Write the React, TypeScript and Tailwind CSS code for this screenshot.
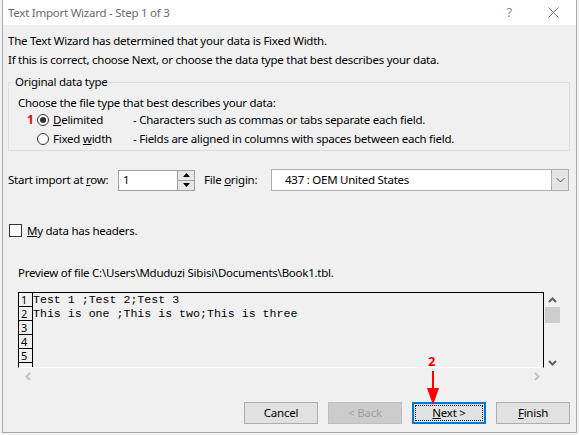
import React from 'react';

function Radio({ checked }: { checked?: boolean }) {
  return (
    <span className="flex h-[12px] w-[12px] shrink-0 items-center justify-center rounded-full border border-[#333333] bg-white">
      {checked && <span className="h-[6px] w-[6px] rounded-full bg-[#333333]" />}
    </span>
  );
}

function Chevron({ dir, color }: { dir: 'up' | 'down' | 'left' | 'right'; color: string }) {
  const d = {
    up: 'M1 6 L4.5 2.5 L8 6',
    down: 'M1 3 L4.5 6.5 L8 3',
    left: 'M6 1 L2.5 4.5 L6 8',
    right: 'M3 1 L6.5 4.5 L3 8',
  }[dir];
  return (
    <svg width="9" height="9" viewBox="0 0 9 9" className="shrink-0">
      <path d={d} fill="none" stroke={color} strokeWidth="2" />
    </svg>
  );
}

function Btn({ children, disabled, focused }: { children: React.ReactNode; disabled?: boolean; focused?: boolean }) {
  if (focused) {
    return (
      <div className="flex h-[22px] w-[74px] items-center justify-center border-2 border-[#0078d7] bg-[#e1e1e1] p-[1px]">
        <div className="flex h-full w-full items-center justify-center border border-dotted border-black">{children}</div>
      </div>
    );
  }
  return (
    <div
      className={
        disabled
          ? 'flex h-[22px] w-[74px] items-center justify-center border border-[#bfbfbf] bg-[#cccccc] text-[#a0a0a0]'
          : 'flex h-[22px] w-[74px] items-center justify-center border border-[#adadad] bg-[#e1e1e1]'
      }
    >
      {children}
    </div>
  );
}

const rows = ['Test 1 ;Test 2;Test 3', 'This is one ;This is two;This is three', '', '', '', ''];

export default function App() {
  return (
    <div className="relative h-[435px] w-[579px] overflow-hidden bg-[#f4f4f4] font-['Noto_Sans',sans-serif] text-[11.5px] tracking-[-0.25px] text-black">
      <div className="ml-[2px] flex h-[433px] w-[575px] flex-col border-x border-b border-[#a8a8a8] bg-[#f0f0f0]">
        {/* title bar */}
        <div className="flex h-[25px] shrink-0 items-center bg-white pl-[5px] pr-[17px]">
          <span className="text-[#6b6b6b]">Text Import Wizard - Step 1 of 3</span>
          <span className="ml-auto text-[13px] text-[#8a8a8a]">?</span>
          <svg width="11" height="11" viewBox="0 0 11 11" className="ml-[36px]">
            <path d="M0.5 0.5 L10.5 10.5 M10.5 0.5 L0.5 10.5" stroke="#7a7a7a" strokeWidth="1" />
          </svg>
        </div>

        <div className="flex flex-col px-[5px]">
          <p className="mt-[6px] leading-[19px]">The Text Wizard has determined that your data is Fixed Width.</p>
          <p className="leading-[19px]">If this is correct, choose Next, or choose the data type that best describes your data.</p>

          <fieldset className="mt-[5px] w-[562px] border border-[#dcdcdc] pb-[2px]">
            <legend className="ml-[4px] px-[2px] leading-[16px]">Original data type</legend>
            <p className="mt-[6px] pl-[9px] leading-[14px]">Choose the file type that best describes your data:</p>
            <div className="flex h-[19px] items-center pl-[18px]">
              <span className="w-[10px] text-[12px] font-bold text-[#ff0000]">1</span>
              <Radio checked />
              <span className="ml-[4px] w-[80px]">
                <span className="underline">D</span>elimited
              </span>
              <span>- Characters such as commas or tabs separate each field.</span>
            </div>
            <div className="flex h-[19px] items-center pl-[28px]">
              <Radio />
              <span className="ml-[4px] w-[80px]">
                Fixed <span className="underline">w</span>idth
              </span>
              <span>- Fields are aligned in columns with spaces between each field.</span>
            </div>
          </fieldset>

          {/* start row / origin */}
          <div className="mt-[18px] flex h-[22px] items-center">
            <span className="w-[110px]">
              Start import at <span className="underline">r</span>ow:
            </span>
            <div className="flex h-[21px] w-[77px] items-center border border-[#a0a0a0] bg-white">
              <span className="flex-1 pl-[4px]">1</span>
              <div className="flex h-full w-[17px] flex-col border-l border-[#a0a0a0]">
                <div className="flex flex-1 items-center justify-center border-b border-[#a0a0a0] bg-[#e6e6e6]">
                  <svg width="7" height="4" viewBox="0 0 7 4"><path d="M0 4 L3.5 0 L7 4 Z" fill="#000" /></svg>
                </div>
                <div className="flex flex-1 items-center justify-center bg-[#e6e6e6]">
                  <svg width="7" height="4" viewBox="0 0 7 4"><path d="M0 0 L3.5 4 L7 0 Z" fill="#000" /></svg>
                </div>
              </div>
            </div>
            <span className="ml-[9px] w-[67px]">
              File <span className="underline">o</span>rigin:
            </span>
            <div className="flex h-[22px] w-[298px] items-center border border-[#adadad] bg-white">
              <span className="flex-1 pl-[13px]">437 : OEM United States</span>
              <div className="flex h-full w-[17px] items-center justify-center border-l border-[#adadad] bg-[#e5e5e5]">
                <svg width="9" height="6" viewBox="0 0 9 6"><path d="M0.5 1 L4.5 5 L8.5 1" fill="none" stroke="#555" strokeWidth="1" /></svg>
              </div>
            </div>
          </div>

          {/* headers checkbox */}
          <div className="mt-[30px] flex h-[19px] items-center">
            <span className="ml-[1px] h-[13px] w-[13px] border border-[#333333] bg-white" />
            <span className="ml-[5px]">
              <span className="underline">M</span>y data has headers.
            </span>
          </div>

          <p className="mt-[23px] pl-[10px] leading-[19px]">Preview of file C:\Users\Mduduzi Sibisi\Documents\Book1.tbl.</p>

          {/* preview */}
          <div className="mt-[10px] flex pl-[10px]">
            <div className="flex h-[76px] w-[526px] overflow-hidden border-x border-t border-b border-black border-b-white">
              <div className="flex w-[14px] shrink-0 flex-col border-r border-black">
                {rows.map((_, i) => (
                  <div key={i} className="h-[14px] shrink-0 border-b border-black pl-[2px] text-[11px] leading-[13px]">
                    {i < 5 ? i + 1 : ''}
                  </div>
                ))}
              </div>
              <div className="flex flex-col font-['Liberation_Mono',monospace] text-[11.6px] tracking-normal">
                {rows.map((r, i) => (
                  <div key={i} className="h-[14px] shrink-0 whitespace-pre leading-[14px]">
                    {r}
                  </div>
                ))}
              </div>
            </div>
            <div className="flex h-[75px] w-[17px] flex-col items-center pt-[4px]">
              <Chevron dir="up" color="#606060" />
              <div className="mt-[2px] h-[16px] w-[15px] bg-[#cdcdcd]" />
              <div className="flex-1" />
              <Chevron dir="down" color="#606060" />
            </div>
          </div>
          <div className="flex h-[16px] w-[534px] items-center justify-between pl-[16px] pr-[1px]">
            <Chevron dir="left" color="#c2c2c2" />
            <Chevron dir="right" color="#c2c2c2" />
          </div>

          {/* buttons */}
          <div className="mt-[18px] flex justify-end gap-[10px] pr-[1px]">
            <Btn>Cancel</Btn>
            <Btn disabled>&lt; Back</Btn>
            <Btn focused>
              <span>
                <span className="underline">N</span>ext &gt;
              </span>
            </Btn>
            <Btn>
              <span>
                <span className="underline">F</span>inish
              </span>
            </Btn>
          </div>
        </div>
      </div>

      {/* red annotation */}
      <span className="absolute left-[428px] top-[353px] text-[13px] font-bold leading-[16px] text-[#ff0000]">2</span>
      <svg className="absolute left-[426px] top-[371px]" width="14" height="35" viewBox="0 0 14 35">
        <path d="M7 0 L7 20" stroke="#ff0000" strokeWidth="2" />
        <path d="M1 17 L13 17 L7 34 Z" fill="#ff0000" />
      </svg>
    </div>
  );
}
